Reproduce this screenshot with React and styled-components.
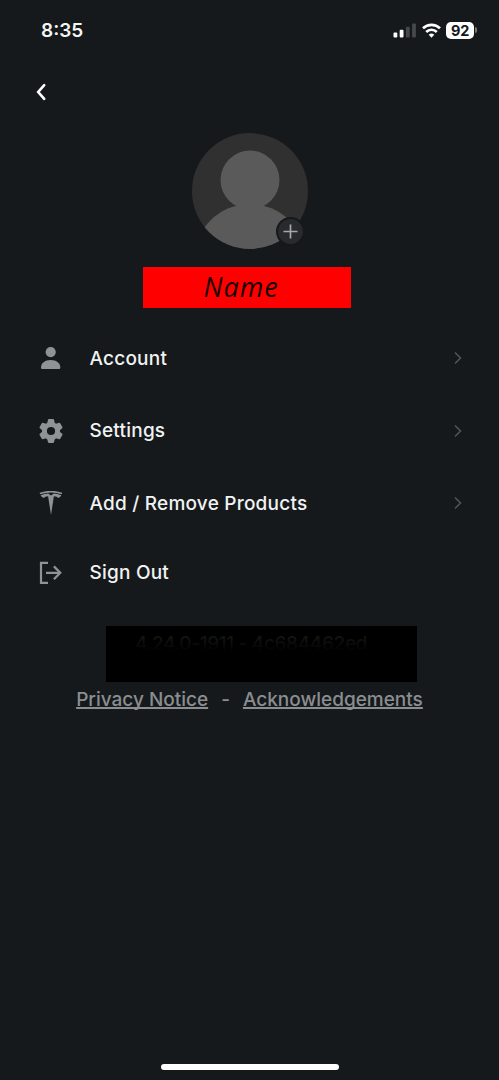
import React from 'react';
import styled, { createGlobalStyle } from 'styled-components';

const GlobalStyle = createGlobalStyle`
  * {
    box-sizing: border-box;
  }

  body {
    margin: 0;
    background: #15191c;
    font-family: Inter, "Liberation Sans", sans-serif;
  }
`;

const Screen = styled.main`
  display: flex;
  flex-direction: column;
  width: 499px;
  height: 1080px;
  background: #15191c;
  overflow: hidden;
`;

const StatusBar = styled.header`
  display: flex;
  align-items: center;
  justify-content: space-between;
  height: 60px;
  padding: 0 21px 0 41px;
`;

const Time = styled.span`
  color: #f4f4f4;
  font-size: 19px;
  font-weight: 600;
`;

const StatusIcons = styled.div`
  display: flex;
  align-items: center;
`;

const Wifi = styled.svg`
  margin: 0 5px 0 6px;
`;

const Battery = styled.div`
  width: 28px;
  height: 17px;
  border-radius: 5px;
  background: #fff;
  color: #15191c;
  font-size: 14.5px;
  font-weight: 700;
  line-height: 17px;
  text-align: center;
  letter-spacing: -0.3px;
`;

const BatteryTip = styled.div`
  width: 2px;
  height: 6px;
  margin: 0 1px;
  border-radius: 0 2px 2px 0;
  background: #777a7c;
`;

const BackButton = styled.button`
  display: flex;
  align-items: center;
  width: 48px;
  height: 64px;
  margin: 0 0 0 17px;
  padding: 0 0 0 18px;
  border: 0;
  background: none;
`;

const Profile = styled.section`
  display: flex;
  flex-direction: column;
  align-items: center;
  padding: 9px 0 14px;
`;

const Avatar = styled.div`
  position: relative;
  width: 116px;
  height: 116px;
`;

const AddPhoto = styled.div`
  position: absolute;
  right: 3px;
  bottom: 3px;
  display: flex;
  align-items: center;
  justify-content: center;
  width: 29px;
  height: 29px;
  border: 2px solid #16181b;
  border-radius: 50%;
  background: #282a2e;
`;

const NameTag = styled.div`
  width: 208px;
  height: 41px;
  margin: 18px 0 0 -6px;
  padding-left: 61px;
  background: #fe0000;
  color: #160505;
  font-family: "Open Sans", "Noto Sans", sans-serif;
  font-size: 27px;
  font-style: italic;
  line-height: 40px;
  letter-spacing: 1px;
`;

const Menu = styled.nav`
  display: flex;
  flex-direction: column;
`;

const MenuItem = styled.a`
  display: flex;
  align-items: center;
  height: ${({ $height }) => $height}px;
  padding: 0 36px 0 39px;
  color: #f1f2f2;
  font-size: 19px;
  font-weight: 500;
  text-decoration: none;
`;

const IconSlot = styled.span`
  display: flex;
  width: 24px;
  margin-right: 26px;
  color: #909393;
`;

const Label = styled.span`
  flex: 1;
  padding-left: 0.5px;
  letter-spacing: 0.22px;
`;

const Version = styled.div`
  position: relative;
  width: 311px;
  height: 56px;
  margin: 20px 0 0 106px;
  padding: 7px 0 0 29px;
  background: #000;
  color: #131414;
  font-size: 19px;
  font-weight: 500;
  line-height: 22px;
  letter-spacing: -0.35px;
  white-space: nowrap;

  &::after {
    content: '';
    position: absolute;
    inset: 0;
    background: linear-gradient(transparent 20%, #000 45%);
  }
`;

const Links = styled.footer`
  display: flex;
  justify-content: center;
  gap: 13px;
  margin-top: 5px;
  color: #8b8e90;
  font-size: 19px;
  font-weight: 500;
  line-height: 25px;
`;

const Link = styled.a`
  text-decoration: underline;
  text-decoration-thickness: 2px;
  text-underline-offset: 1px;
  text-decoration-skip-ink: none;
`;

const HomeIndicator = styled.div`
  width: 178px;
  height: 6px;
  margin: auto auto 10px;
  border-radius: 3px;
  background: #fff;
`;

const PersonIcon = () => (
  <svg width="24" height="24" viewBox="0 0 24 24" fill="currentColor">
    <circle cx="11.7" cy="6.1" r="5.1" />
    <path d="M2 21.5c0-4.4 3.8-7.6 9.7-7.6s9.6 3.2 9.6 7.6c0 1-.6 1.5-1.5 1.5H3.5c-.9 0-1.5-.5-1.5-1.5z" />
  </svg>
);

const GearIcon = () => (
  <svg width="24" height="24" viewBox="0 0 24 24" fill="currentColor">
    <circle cx="12" cy="12" r="6.6" fill="none" stroke="currentColor" strokeWidth="5" />
    {[0, 60, 120, 180, 240, 300].map(angle => (
      <path
        key={angle}
        d="M9.8 .1h4.4q.7 0 .9 .8l.9 4.6H8l.9-4.6q.2-.8 .9-.8z"
        transform={`rotate(${angle} 12 12)`}
      />
    ))}
  </svg>
);

const TeslaIcon = () => (
  <svg width="24" height="24" viewBox="0 0 24 24" fill="currentColor">
    <path d="M.6 1.8Q12-2.2 23.2 1.8L22.7 3.3Q12-.3 1.2 3.3z" />
    <path d="M1.6 4.3Q5.6 2.5 9.3 2.5L12 4.6L14.7 2.5Q18.4 2.5 22.3 4.3Q21.4 6.5 19.2 7Q18.2 5.4 14.9 5.2L12 24L9.1 5.2Q5.8 5.4 4.8 7Q2.6 6.5 1.6 4.3z" />
  </svg>
);

const SignOutIcon = () => (
  <svg width="24" height="24" viewBox="0 0 24 24" fill="none" stroke="currentColor" strokeWidth="2.2">
    <path d="M9 1.8H2v20h7M7 11.8h14.5M14.9 5.4l6.4 6.4-6.4 6.4" />
  </svg>
);

const Chevron = () => (
  <svg width="10" height="14" viewBox="0 0 10 14" fill="none" stroke="#505456" strokeWidth="1.6">
    <path d="M2 1.5L7.5 7L2 12.5" />
  </svg>
);

const items = [
  { label: 'Account', icon: <PersonIcon />, height: 72, arrow: true },
  { label: 'Settings', icon: <GearIcon />, height: 73, arrow: true },
  { label: 'Add / Remove Products', icon: <TeslaIcon />, height: 72, arrow: true },
  { label: 'Sign Out', icon: <SignOutIcon />, height: 67 },
];

export default function App() {
  return (
    <Screen>
      <GlobalStyle />
      <StatusBar>
        <Time>8:35</Time>
        <StatusIcons>
          <svg width="23" height="15" viewBox="0 0 23 15" fill="#fff">
            <rect x="0.5" y="9.5" width="3.8" height="5" rx="1" />
            <rect x="6.7" y="6.8" width="3.8" height="7.7" rx="1" />
            <rect x="12.9" y="3.8" width="3.8" height="10.7" rx="1" fill="#46494b" />
            <rect x="19.1" y="0.5" width="3.8" height="14" rx="1" fill="#46494b" />
          </svg>
          <Wifi width="19" height="15" viewBox="0 0 19 15" fill="none" stroke="#fff" strokeWidth="2.6">
            <path d="M1 5.3a12.2 12.2 0 0 1 17 0M4.2 9a7.5 7.5 0 0 1 10.6 0" />
            <path d="M9.5 14.7L6.7 11.8a4 4 0 0 1 5.6 0z" fill="#fff" stroke="none" />
          </Wifi>
          <Battery>92</Battery>
          <BatteryTip />
        </StatusIcons>
      </StatusBar>
      <BackButton aria-label="Back">
        <svg width="12" height="18" viewBox="0 0 12 18" fill="none" stroke="#fff" strokeWidth="2.6" strokeLinecap="round">
          <path d="M9.2 2.2L3.2 9l6 6.8" />
        </svg>
      </BackButton>
      <Profile>
        <Avatar>
          <svg width="116" height="116" viewBox="0 0 116 116">
            <clipPath id="avatar">
              <circle cx="58" cy="58" r="58" />
            </clipPath>
            <g clipPath="url(#avatar)">
              <rect width="116" height="116" fill="#303030" />
              <g fill="#5a5a5a">
                <circle cx="58" cy="47" r="29.5" />
                <circle cx="58" cy="127" r="56" />
              </g>
            </g>
          </svg>
          <AddPhoto>
            <svg width="15" height="15" viewBox="0 0 15 15" stroke="#a5a7a9" strokeWidth="1.7">
              <path d="M7.5 .5v14M.5 7.5h14" />
            </svg>
          </AddPhoto>
        </Avatar>
        <NameTag>Name</NameTag>
      </Profile>
      <Menu>
        {items.map(({ label, icon, height, arrow }) => (
          <MenuItem key={label} $height={height}>
            <IconSlot>{icon}</IconSlot>
            <Label>{label}</Label>
            {arrow && <Chevron />}
          </MenuItem>
        ))}
      </Menu>
      <Version>4.24.0-1911 - 4c684462ed</Version>
      <Links>
        <Link>Privacy Notice</Link>
        <span>-</span>
        <Link>Acknowledgements</Link>
      </Links>
      <HomeIndicator />
    </Screen>
  );
}
